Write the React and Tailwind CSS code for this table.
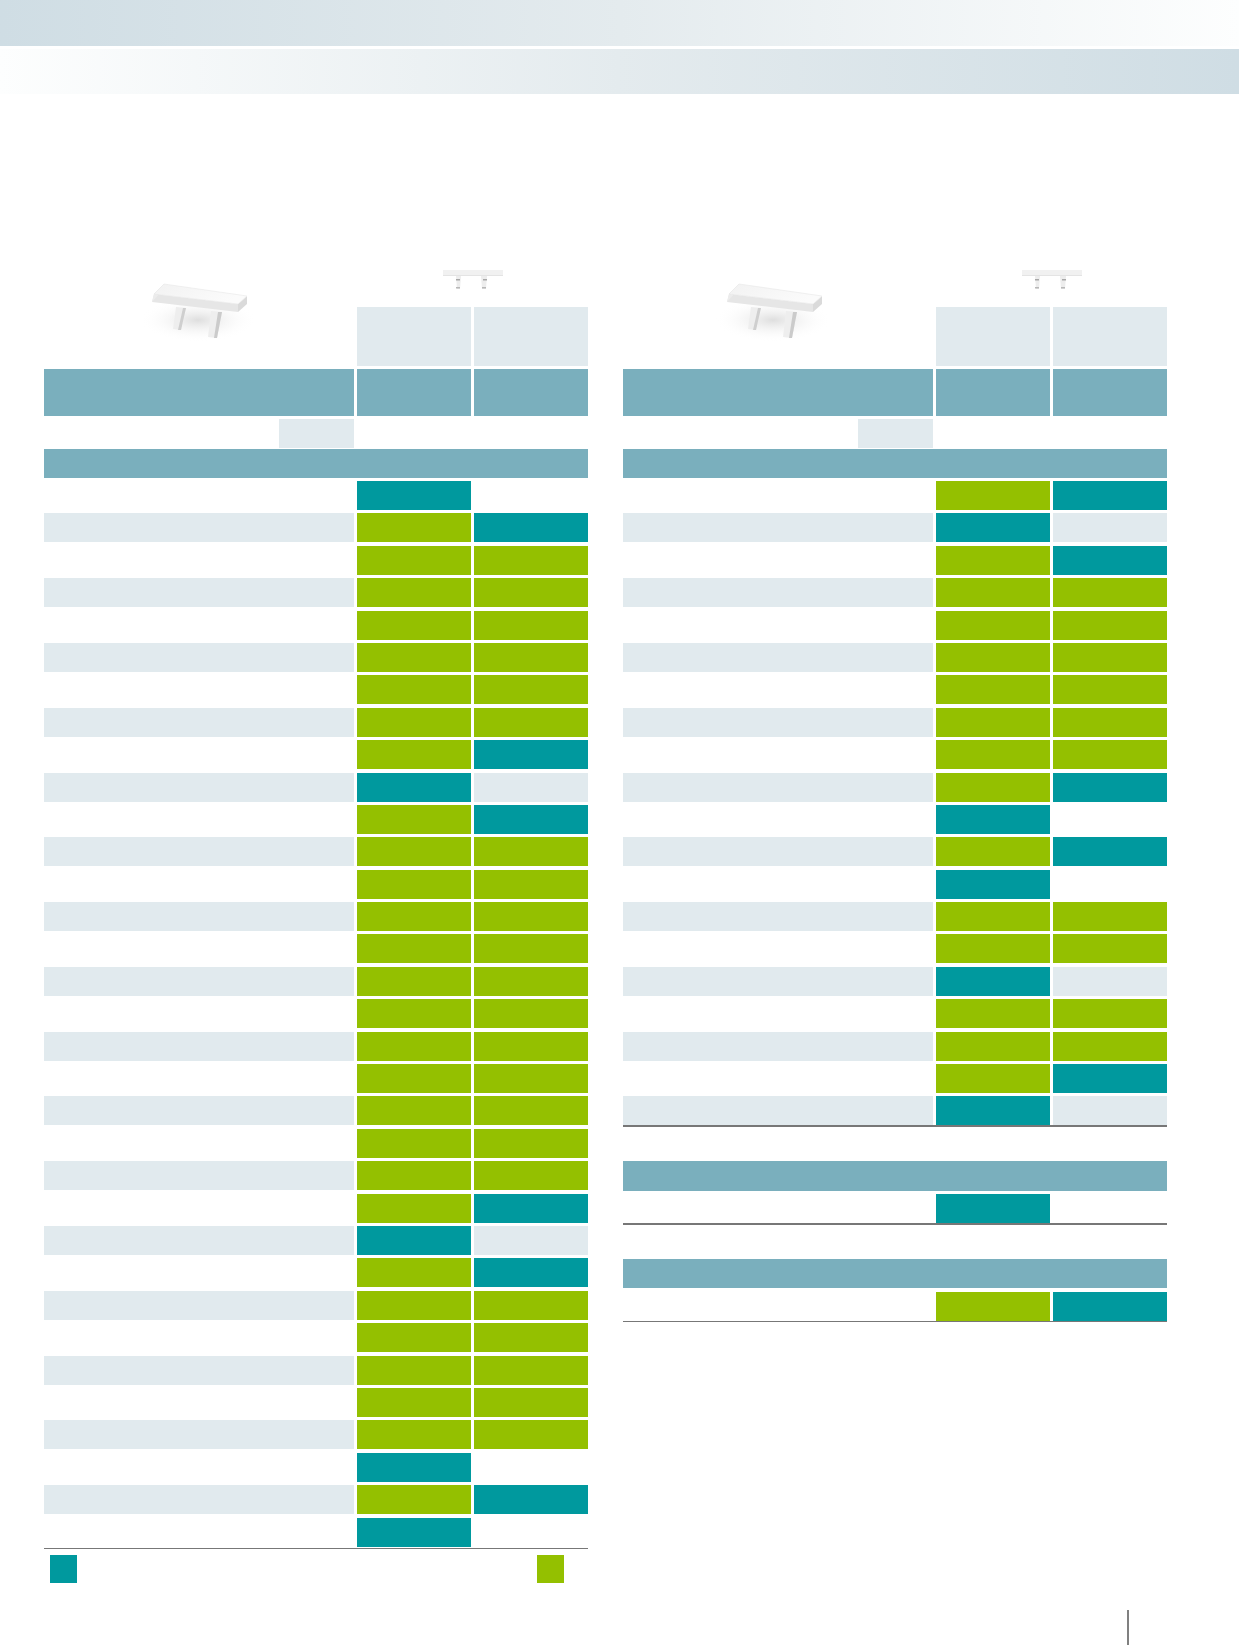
import React from "react";

const LEFT = [
  "TE","GT","GG","GG","GG","GG","GG","GG","GT","TE","GT","GG","GG","GG","GG","GG","GG",
  "GG","GG","GG","GG","GG","GT","TE","GT","GG","GG","GG","GG","GG","TE","GT","TE",
];
const RIGHT = [
  "GT","TE","GT","GG","GG","GG","GG","GG","GG","GT","TE","GT","TE","GG","GG","TE","GG","GG","GT","TE",
];

function Cell({ v, shaded }) {
  if (v === "T") return <div className="h-[29px] bg-[#00999e]" />;
  if (v === "G") return <div className="h-[29px] bg-[#94c000]" />;
  if (shaded) return <div className="h-[29px] bg-[#e1eaee]" />;
  return <div className="h-[29px] bg-white" />;
}

function Rows({ data, shadeEven = true }) {
  return (
    <div className="grid grid-cols-[310px_114px_114px] gap-x-[3px] gap-y-[3.4px]">
      {data.map((r, i) => {
        const shaded = shadeEven && i % 2 === 1;
        return (
          <React.Fragment key={i}>
            <div className={shaded ? "h-[29px] bg-[#e1eaee]" : "h-[29px] bg-white"} />
            <Cell v={r[0]} shaded={shaded} />
            <Cell v={r[1]} shaded={shaded} />
          </React.Fragment>
        );
      })}
    </div>
  );
}

function BigImg({ id }) {
  return (
    <svg width="140" height="90" viewBox="0 0 140 90">
      <defs>
        <radialGradient id={`sh${id}`} cx="50%" cy="50%" r="50%">
          <stop offset="0%" stopColor="#bdbdbd" stopOpacity="0.5" />
          <stop offset="100%" stopColor="#ffffff" stopOpacity="0" />
        </radialGradient>
        <linearGradient id={`top${id}`} x1="0" y1="0" x2="1" y2="0.4">
          <stop offset="0%" stopColor="#f2f2f2" />
          <stop offset="100%" stopColor="#fbfbfb" />
        </linearGradient>
      </defs>
      <ellipse cx="68" cy="60" rx="58" ry="22" fill={`url(#sh${id})`} />
      {/* legs */}
      <path d="M46 47 L56 48 L51 70 L43 69 Z" fill="#eeeeee" />
      <path d="M53 48 L56 48 L51 70 L48 70 Z" fill="#cfcfcf" />
      <path d="M81 51 L92 52 L87 78 L78 77 Z" fill="#eeeeee" />
      <path d="M88 52 L92 52 L87 78 L84 78 Z" fill="#cbcbcb" />
      {/* plate */}
      <path d="M24 34 L108 44 L108 52 L22 42 Z" fill="#e6e6e6" />
      <path d="M117 36 L108 44 L108 52 L117 44 Z" fill="#dadada" />
      <path d="M34 24 L24 34 L22 42 L31 32 Z" fill="#ececec" />
      <path d="M34 24 L117 36 L108 44 L24 34 Z" fill={`url(#top${id})`} stroke="#e8e8e8" strokeWidth="0.6" />
    </svg>
  );
}

function SmallImg() {
  return (
    <svg width="62" height="22" viewBox="0 0 62 22">
      <rect x="1" y="0" width="60" height="6" fill="#f1f1f1" />
      <rect x="1" y="5" width="60" height="1" fill="#e4e4e4" />
      <path d="M14 6 L19 6 L18 19 L15 19 Z" fill="#ededed" />
      <rect x="14" y="9" width="4" height="1.5" fill="#a8a8a8" />
      <rect x="14" y="17" width="4" height="1.5" fill="#b8b8b8" />
      <path d="M39 6 L45 6 L44 19 L40 19 Z" fill="#ededed" />
      <rect x="41" y="9" width="4" height="1.5" fill="#a8a8a8" />
      <rect x="40" y="17" width="4" height="1.5" fill="#b8b8b8" />
    </svg>
  );
}

function TableHead({ imgOffset, id }) {
  return (
    <>
      <div className="flex h-[106px]">
        <div className="w-[310px] h-full" style={{ paddingLeft: imgOffset }}>
          <BigImg id={id} />
        </div>
        <div className="ml-[3px] w-[231px] flex flex-col">
          <div className="h-[47px] pt-[10px] flex justify-center">
            <SmallImg />
          </div>
          <div className="flex gap-[3px] h-[59px]">
            <div className="w-[114px] bg-[#e1eaee]" />
            <div className="w-[114px] bg-[#e1eaee]" />
          </div>
        </div>
      </div>
      <div className="mt-[3px] grid grid-cols-[310px_114px_114px] gap-x-[3px]">
        <div className="h-[47px] bg-[#7aafbd]" />
        <div className="h-[47px] bg-[#7aafbd]" />
        <div className="h-[47px] bg-[#7aafbd]" />
      </div>
      <div className="mt-[3px] w-[310px] flex justify-end">
        <div className="w-[75px] h-[29px] bg-[#e1eaee]" />
      </div>
      <div className="mt-[1px] h-[29px] bg-[#7aafbd]" />
    </>
  );
}

export default function App() {
  return (
    <div className="w-[1239px] h-[1645px] bg-white overflow-hidden">
      <div className="h-[46px] bg-linear-to-r from-[#cfdde4] via-[#e4ebee] to-[#fdfefe]" />
      <div className="mt-[3px] h-[45px] bg-linear-to-r from-[#fdfefe] via-[#e4ebee] to-[#cfdde4]" />

      <div className="mt-[166px] pl-[44px] flex gap-[35px] items-start">
        {/* Left table */}
        <div className="w-[544px] flex flex-col">
          <TableHead imgOffset={86} id="a" />
          <div className="mt-[3px]">
            <Rows data={LEFT} />
          </div>
          <div className="mt-[1px] h-[1.5px] bg-[#777777]" />
          <div className="mt-[5.5px] flex pl-[6px]">
            <div className="w-[27px] h-[28px] bg-[#00999e]" />
            <div className="ml-[460px] w-[27px] h-[28px] bg-[#94c000]" />
          </div>
        </div>

        {/* Right table */}
        <div className="w-[544px] flex flex-col">
          <TableHead imgOffset={82} id="b" />
          <div className="mt-[3px]">
            <Rows data={RIGHT} />
          </div>
          <div className="h-[1.5px] bg-[#777777]" />

          <div className="mt-[34.5px] h-[29.5px] bg-[#7aafbd]" />
          <div className="mt-[3.3px]">
            <Rows data={["TE"]} shadeEven={false} />
          </div>
          <div className="h-[1.5px] bg-[#777777]" />

          <div className="mt-[34px] h-[29.5px] bg-[#7aafbd]" />
          <div className="mt-[3.3px]">
            <Rows data={["GT"]} shadeEven={false} />
          </div>
          <div className="h-[1.5px] bg-[#777777]" />
        </div>
      </div>

      <div className="mt-[27px] ml-[1127px] w-[2px] h-[35px] bg-[#808080]" />
    </div>
  );
}
